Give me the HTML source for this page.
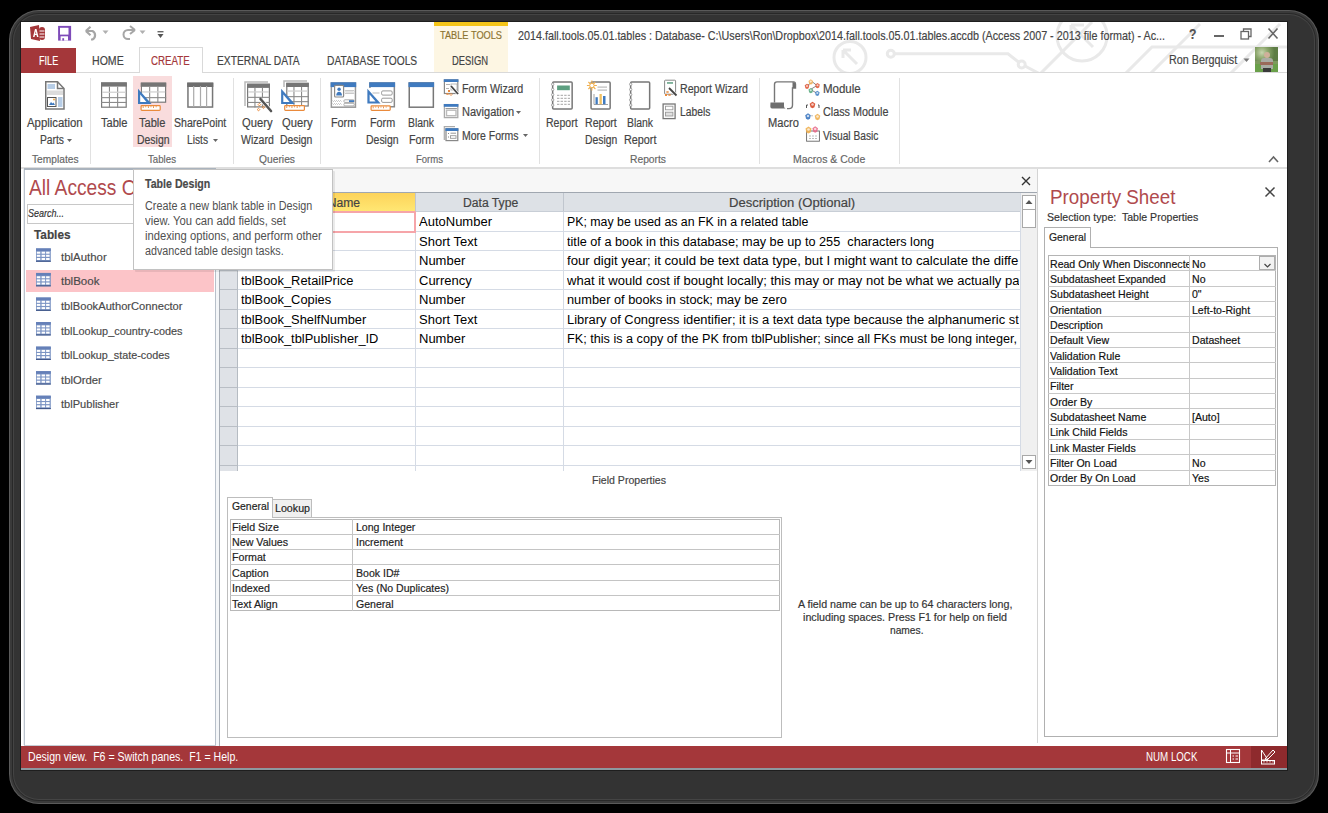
<!DOCTYPE html><html><head><meta charset="utf-8"><style>
html,body{margin:0;padding:0;width:1328px;height:813px;overflow:hidden;background:#000;}
body{position:relative;font-family:"Liberation Sans", sans-serif;}
.a{position:absolute;}
.t{position:absolute;white-space:pre;line-height:1;transform-origin:0 0;-webkit-text-stroke:0.18px currentColor;}
</style></head><body>
<div class="a" style="left:9px;top:10px;width:1310px;height:794px;background:#5a5a5a;border-radius:30px;"></div>
<div class="a" style="left:10px;top:11px;width:1308px;height:792px;background:#3a3a3a;border-radius:29px;"></div>
<div class="a" style="left:12px;top:13px;width:1304px;height:788px;background:#282828;border-radius:27px;"></div>
<div class="a" style="left:13px;top:14px;width:1302px;height:786px;background:#444444;border-radius:26px;"></div>
<div class="a" style="left:14px;top:15px;width:1300px;height:784px;background:#333333;border-radius:25px;"></div>
<div class="a" style="left:20px;top:21px;width:1268px;height:750px;background:#1e1e1e;"></div>
<div class="a" style="left:21px;top:22px;width:1266px;height:748px;background:#ffffff;"></div>
<svg class="a" style="left:0;top:0" width="1328" height="813"><defs><clipPath id="wm"><rect x="509" y="22" width="778" height="50"/></clipPath></defs>
<g clip-path="url(#wm)" stroke="#e9e9e9" stroke-width="3" fill="none">
<circle cx="850" cy="57.4" r="16"/>
<path d="M843 50 L857 64 M843 50 V58 M843 50 H851"/>
<circle cx="890.8" cy="53.8" r="3.5"/>
<path d="M894.3 53.8 H1008 L1018.5 62"/>
<circle cx="1021.7" cy="64.5" r="3.5"/>
<path d="M1025 66 L1040 74"/>
<circle cx="1082" cy="36" r="25"/>
<path d="M1071 25 L1093 47 M1071 25 V38 M1071 25 H1084"/>
<path d="M1040 74 L1092 22"/>
<path d="M1125 74 L1152 47 H1290"/>
<path d="M1150 74 L1200 24 M1230 74 L1280 24"/>
</g></svg>
<svg class="a" style="left:29px;top:24px" width="18" height="19" viewBox="0 0 18 19"><path d="M1 3 L10 1 L11 17 L2 15 Z" fill="#a4373a"/>
<path d="M4 13 L6 5 L7.5 5 L9.5 13 L8 13 L7.5 11 L6 11 L5.5 13Z M6.2 9.7 L7.3 9.7 L6.8 7.2Z" fill="#fff"/>
<rect x="10" y="3" width="6" height="13" rx="3" fill="#a4373a"/>
<path d="M10.5 7 h5 M10.5 10 h5 M10.5 13 h5" stroke="#fff" stroke-width="1"/></svg>
<svg class="a" style="left:57px;top:25px" width="15" height="16" viewBox="0 0 15 16"><rect x="1.1" y="0.9" width="13" height="14.7" fill="#7e4bb9"/>
<rect x="3" y="2.8" width="8.5" height="6.8" fill="#fff"/>
<rect x="3.6" y="11.3" width="7.4" height="4.3" fill="#fff"/><rect x="5.3" y="13.2" width="1.8" height="2.4" fill="#7e4bb9"/></svg>
<svg class="a" style="left:84px;top:25px" width="16" height="16" viewBox="0 0 16 16"><path d="M1.8 6 L6.5 1.8 M1.8 6 L6.5 10.2" stroke="#a6a6a6" stroke-width="2.2" fill="none"/>
<path d="M2.5 6 H8.5 A4.8 4.8 0 0 1 8.5 14.5 H7" stroke="#a6a6a6" stroke-width="2.2" fill="none"/></svg>
<svg class="a" style="left:102px;top:30px" width="7" height="5" viewBox="0 0 7 5"><path d="M0.5 0.5 L6.5 0.5 L3.5 4Z" fill="#b0b0b0"/></svg>
<svg class="a" style="left:121px;top:25px" width="16" height="16" viewBox="0 0 16 16"><path d="M14 5 L9 1 M14 5 L9 9" stroke="#a6a6a6" stroke-width="2" fill="none"/>
<path d="M13.5 5 H7 A4.5 4.5 0 0 0 7 14 H9" stroke="#a6a6a6" stroke-width="2" fill="none"/></svg>
<svg class="a" style="left:139px;top:30px" width="7" height="5" viewBox="0 0 7 5"><path d="M0.5 0.5 L6.5 0.5 L3.5 4Z" fill="#b0b0b0"/></svg>
<svg class="a" style="left:157px;top:30px" width="7" height="9" viewBox="0 0 7 9"><rect x="0.5" y="1" width="6" height="1.4" fill="#666"/><path d="M0.5 4 L6.5 4 L3.5 8Z" fill="#555"/></svg>
<div class="a" style="left:434px;top:22px;width:74px;height:50px;background:#fdf6e3;"></div>
<div class="a" style="left:434px;top:22px;width:74px;height:4px;background:#f5c518;"></div>
<div class="a" style="left:1214px;top:35px;width:10px;height:2px;background:#666;"></div>
<svg class="a" style="left:1240px;top:28px" width="12" height="12" viewBox="0 0 12 12"><rect x="1" y="3.5" width="7.5" height="7.5" fill="none" stroke="#666" stroke-width="1.3"/><path d="M3.5 3.5 V1 H11 V8.5 H8.5" fill="none" stroke="#666" stroke-width="1.3"/></svg>
<svg class="a" style="left:1267px;top:27px" width="12" height="13" viewBox="0 0 12 13"><path d="M1.5 1.5 L10.5 11.5 M10.5 1.5 L1.5 11.5" stroke="#666" stroke-width="1.6"/></svg>
<div class="a" style="left:21px;top:72px;width:1266px;height:1px;background:#d9d9d9;"></div>
<div class="a" style="left:21px;top:48px;width:55px;height:25px;background:#a4373a;"></div>
<div class="a" style="left:139px;top:47px;width:64px;height:26px;background:#fff;box-sizing:border-box;border:1px solid #d9d9d9;border-bottom:none;"></div>
<svg class="a" style="left:1243px;top:58px" width="7" height="5" viewBox="0 0 7 5"><path d="M0.5 0.5 L6.5 0.5 L3.5 4Z" fill="#777"/></svg>
<div class="a" style="left:1255px;top:47px;width:23px;height:25px;overflow:hidden;background:#7d9a5e">
<div class="a" style="left:0;top:0;width:23px;height:14px;background:radial-gradient(circle at 30% 40%,#c9d6b0 0,#8aa56a 35%,#5e7d45 70%)"></div>
<div class="a" style="left:0;top:17px;width:23px;height:8px;background:#6aa04a"></div>
<div class="a" style="left:9px;top:5px;width:6px;height:6px;border-radius:3px;background:#d0b09a"></div>
<div class="a" style="left:6px;top:11px;width:12px;height:11px;border-radius:3px 3px 0 0;background:#a9aca4"></div>
<div class="a" style="left:5px;top:15px;width:13px;height:3px;background:#9a6a5a"></div>
<div class="a" style="left:8px;top:21px;width:8px;height:4px;background:#3a3a3a"></div>
</div>
<div class="a" style="left:21px;top:167px;width:1266px;height:2px;background:#dedede;"></div>
<div class="a" style="left:90px;top:78px;width:1px;height:86px;background:#e1e1e1;"></div>
<div class="a" style="left:233px;top:78px;width:1px;height:86px;background:#e1e1e1;"></div>
<div class="a" style="left:320px;top:78px;width:1px;height:86px;background:#e1e1e1;"></div>
<div class="a" style="left:539px;top:78px;width:1px;height:86px;background:#e1e1e1;"></div>
<div class="a" style="left:759px;top:78px;width:1px;height:86px;background:#e1e1e1;"></div>
<div class="a" style="left:899px;top:78px;width:1px;height:86px;background:#e1e1e1;"></div>
<div class="a" style="left:133px;top:76px;width:39px;height:71px;background:#f9dcdd;"></div>
<svg class="a" style="left:67px;top:139px" width="6" height="4" viewBox="0 0 6 4"><path d="M0 0 L5 0 L2.5 3Z" fill="#666"/></svg>
<svg class="a" style="left:212.5px;top:139px" width="6" height="4" viewBox="0 0 6 4"><path d="M0 0 L5 0 L2.5 3Z" fill="#666"/></svg>
<svg class="a" style="left:515.5px;top:110.5px" width="6" height="4" viewBox="0 0 6 4"><path d="M0 0 L5 0 L2.5 3Z" fill="#666"/></svg>
<svg class="a" style="left:522.5px;top:134px" width="6" height="4" viewBox="0 0 6 4"><path d="M0 0 L5 0 L2.5 3Z" fill="#666"/></svg>
<svg class="a" style="left:1268px;top:155px" width="11" height="8" viewBox="0 0 11 8"><path d="M1 7 L5.5 2 L10 7" stroke="#666" stroke-width="1.6" fill="none"/></svg>
<svg class="a" style="left:0px;top:0px" width="900" height="150" viewBox="0 0 900 150"><path d="M45.75 81.75 H57.5 L64 88.5 V109 H45.75 Z" fill="#fff" stroke="#777777" stroke-width="1.5"/>
<path d="M57.5 81.75 V88.5 H64" fill="none" stroke="#777777" stroke-width="1.5"/>
<rect x="47.5" y="84" width="7.5" height="5" fill="#b7cde6"/>
<rect x="47" y="90.5" width="16" height="4.5" fill="#dcdcdc"/>
<rect x="47.5" y="97.5" width="8.5" height="9" fill="#fff" stroke="#555" stroke-width="1"/>
<path d="M49 105 L51 102 L52.5 103.5 L53.5 102.5 L55 105Z" fill="#3f7abf"/>
<circle cx="54" cy="99.5" r="0.9" fill="#f0a030"/>
<rect x="58" y="97" width="4.5" height="10" fill="#b7cde6"/><rect x="101.6" y="83.0" width="24.599999999999998" height="24.199999999999992" fill="#fff" stroke="#7a7a7a" stroke-width="1.2"/><rect x="101" y="82.4" width="25.799999999999997" height="4.2" fill="#757575"/><rect x="108.9" y="86.60000000000001" width="1.1" height="21.199999999999992" fill="#8a8a8a"/><rect x="117.1" y="86.60000000000001" width="1.1" height="21.199999999999992" fill="#8a8a8a"/><rect x="101" y="97.1" width="25.799999999999997" height="1.1" fill="#8a8a8a"/><rect x="101" y="101.9" width="25.799999999999997" height="1.1" fill="#8a8a8a"/><rect x="102" y="91.60000000000001" width="23.799999999999997" height="1.3" fill="#d2d2d2"/><rect x="141.4" y="83.19999999999999" width="24.199999999999978" height="19.000000000000004" fill="#fff" stroke="#7a7a7a" stroke-width="1.2"/><rect x="140.8" y="82.6" width="25.399999999999977" height="4.2" fill="#757575"/><rect x="149.1" y="86.8" width="1.1" height="16.000000000000004" fill="#8a8a8a"/><rect x="157.3" y="86.8" width="1.1" height="16.000000000000004" fill="#8a8a8a"/><rect x="140.8" y="97.1" width="25.399999999999977" height="1.1" fill="#8a8a8a"/><rect x="141.8" y="91.30000000000001" width="23.399999999999977" height="1.3" fill="#d2d2d2"/><rect x="136" y="87" width="4.8" height="18" fill="#f9dcdd"/><path d="M138 88.8 L138 103.9 L151.6 103.9 Z" fill="#3f7abf"/><path d="M140.2 94.538 L140.2 101.9 L146.432 101.9 Z" fill="#fff"/><rect x="141.1" y="105.6" width="19.100000000000012" height="4.8" rx="0.8" fill="#fff" stroke="#ea8a3b" stroke-width="1.2"/><rect x="142.7" y="106.2" width="0.9" height="1.8" fill="#ea8a3b"/><rect x="145.29999999999998" y="106.2" width="0.9" height="1.1" fill="#ea8a3b"/><rect x="147.89999999999998" y="106.2" width="0.9" height="1.8" fill="#ea8a3b"/><rect x="150.5" y="106.2" width="0.9" height="1.1" fill="#ea8a3b"/><rect x="153.1" y="106.2" width="0.9" height="1.8" fill="#ea8a3b"/><rect x="155.7" y="106.2" width="0.9" height="1.1" fill="#ea8a3b"/><rect x="187.95" y="83.35" width="24.6" height="23.7" fill="#fff" stroke="#777777" stroke-width="1.5"/>
<rect x="187.2" y="82.6" width="26.1" height="4.4" fill="#6e6e6e"/>
<rect x="193.1" y="86" width="1.2" height="21" fill="#aaa"/><rect x="199.9" y="86" width="1.2" height="21" fill="#aaa"/><rect x="206" y="86" width="1.2" height="21" fill="#aaa"/><path d="M245 106 V82 H268" fill="none" stroke="#b9b9b9" stroke-width="1.5"/><rect x="247.6" y="84.3" width="21.8" height="22.599999999999998" fill="#fff" stroke="#7a7a7a" stroke-width="1.2"/><rect x="247" y="83.7" width="23" height="4.2" fill="#757575"/><rect x="254.4" y="87.9" width="1.1" height="19.599999999999998" fill="#8a8a8a"/><rect x="261.9" y="87.9" width="1.1" height="19.599999999999998" fill="#8a8a8a"/><rect x="247" y="96.8" width="23" height="1.1" fill="#8a8a8a"/><rect x="247" y="101.9" width="23" height="1.1" fill="#8a8a8a"/><rect x="248" y="91.30000000000001" width="21" height="1.3" fill="#d2d2d2"/><path d="M260.5 99 L271 111" stroke="#fff" stroke-width="4"/><path d="M260.5 99 L271 111" stroke="#555" stroke-width="2.6" stroke-linecap="round"/><g fill="none" stroke="#ea8a3b" stroke-width="1"><path d="M259.4 103.3 l1.3 1.3 l-1.3 1.3 l-1.3 -1.3z"/><path d="M263.5 106 l1.3 1.3 l-1.3 1.3 l-1.3 -1.3z"/><path d="M258.5 108.3 l1.3 1.3 l-1.3 1.3 l-1.3 -1.3z"/></g><path d="M284 92 V81 H307" fill="none" stroke="#b9b9b9" stroke-width="1.5"/><rect x="286.8" y="83.39999999999999" width="21.400000000000023" height="22.599999999999998" fill="#fff" stroke="#7a7a7a" stroke-width="1.2"/><rect x="286.2" y="82.8" width="22.600000000000023" height="4.2" fill="#757575"/><rect x="293.4" y="87.0" width="1.1" height="19.599999999999998" fill="#8a8a8a"/><rect x="301.0" y="87.0" width="1.1" height="19.599999999999998" fill="#8a8a8a"/><rect x="286.2" y="96.1" width="22.600000000000023" height="1.1" fill="#8a8a8a"/><rect x="286.2" y="101.1" width="22.600000000000023" height="1.1" fill="#8a8a8a"/><rect x="287.2" y="90.4" width="20.600000000000023" height="1.3" fill="#d2d2d2"/><rect x="279" y="87" width="7" height="18" fill="#fff"/><path d="M281.1 88.8 L281.1 104 L294.8 104 Z" fill="#3f7abf"/><path d="M283.3 94.576 L283.3 102 L289.594 102 Z" fill="#fff"/><rect x="284.70000000000005" y="105.6" width="19.699999999999978" height="4.8" rx="0.8" fill="#fff" stroke="#ea8a3b" stroke-width="1.2"/><rect x="286.3" y="106.2" width="0.9" height="1.8" fill="#ea8a3b"/><rect x="288.90000000000003" y="106.2" width="0.9" height="1.1" fill="#ea8a3b"/><rect x="291.5" y="106.2" width="0.9" height="1.8" fill="#ea8a3b"/><rect x="294.1" y="106.2" width="0.9" height="1.1" fill="#ea8a3b"/><rect x="296.7" y="106.2" width="0.9" height="1.8" fill="#ea8a3b"/><rect x="299.3" y="106.2" width="0.9" height="1.1" fill="#ea8a3b"/><rect x="331.35" y="83" width="24.1" height="24.2" fill="#fff" stroke="#999" stroke-width="1.5"/>
<rect x="330.6" y="82.3" width="25.6" height="4.8" fill="#3f7abf"/>
<rect x="334.6" y="85.4" width="9" height="11.6" rx="1" fill="#fff" stroke="#8a8a8a" stroke-width="1.2"/>
<circle cx="339.1" cy="89.3" r="1.7" fill="#3f7abf"/><path d="M336.2 95.5 Q336.5 91.8 339.1 91.8 Q341.7 91.8 342 95.5Z" fill="#3f7abf"/>
<path d="M345 90 l1 1.5 l1 -1.5 l1 1.5 l1 -1.5 l1 1.5 l1 -1.5 l1 1.5 l1 -1.5 l1 1.5 M345 92.5 l1 1.5 l1 -1.5 l1 1.5 l1 -1.5 l1 1.5 l1 -1.5 l1 1.5 l1 -1.5 l1 1.5" stroke="#aaa" stroke-width="0.7" fill="none"/>
<path d="M332.5 100.5 l1 1 l1 -1 l1 1 l1 -1 l1 1 l1 -1 l1 1 l1 -1 l1 1 M332.5 103.5 l1 1 l1 -1 l1 1 l1 -1 l1 1 l1 -1 l1 1 l1 -1 l1 1" stroke="#999" stroke-width="0.6" fill="none"/>
<rect x="343.9" y="99.8" width="10.3" height="2.6" rx="1" fill="#fff" stroke="#999" stroke-width="0.8"/><rect x="349" y="100.2" width="5" height="1.8" fill="#3f7abf"/>
<rect x="343.9" y="103.3" width="10.3" height="2.6" rx="1" fill="#fff" stroke="#999" stroke-width="0.8"/><path d="M369.95 88 V83 H394.35 V106.7 H390" fill="#fff" stroke="#8a8a8a" stroke-width="1.5"/>
<rect x="369.2" y="82.3" width="25.9" height="4.8" fill="#3f7abf"/>
<rect x="381.6" y="90.9" width="10.6" height="4.2" rx="1.3" fill="#fff" stroke="#999" stroke-width="1"/>
<rect x="381.6" y="98.2" width="10.6" height="4.2" rx="1.3" fill="#fff" stroke="#999" stroke-width="1"/>
<rect x="372.5" y="92.5" width="7" height="1" fill="#bbb"/><path d="M367.4 88.8 L367.4 103.6 L380.6 103.6 Z" fill="#3f7abf"/><path d="M369.59999999999997 94.42399999999999 L369.59999999999997 101.6 L375.584 101.6 Z" fill="#fff"/><rect x="371.1" y="105.89999999999999" width="19.100000000000012" height="4.500000000000003" rx="0.8" fill="#fff" stroke="#ea8a3b" stroke-width="1.2"/><rect x="372.7" y="106.5" width="0.9" height="1.8" fill="#ea8a3b"/><rect x="375.3" y="106.5" width="0.9" height="1.1" fill="#ea8a3b"/><rect x="377.9" y="106.5" width="0.9" height="1.8" fill="#ea8a3b"/><rect x="380.5" y="106.5" width="0.9" height="1.1" fill="#ea8a3b"/><rect x="383.09999999999997" y="106.5" width="0.9" height="1.8" fill="#ea8a3b"/><rect x="385.7" y="106.5" width="0.9" height="1.1" fill="#ea8a3b"/><rect x="409.25" y="83" width="24.1" height="24.2" fill="#fff" stroke="#777777" stroke-width="1.5"/>
<rect x="408.5" y="82.3" width="25.6" height="4.8" fill="#3f7abf"/><rect x="444.4" y="79.9" width="13.4" height="13.6" fill="#fff" stroke="#888" stroke-width="1.2"/>
<rect x="443.8" y="79.3" width="14.6" height="2.7" fill="#3f7abf"/>
<rect x="446" y="84" width="4" height="0.9" fill="#aaa"/><rect x="446" y="88" width="3" height="0.9" fill="#aaa"/>
<rect x="451" y="84" width="6" height="6" fill="#fff" stroke="#aaa" stroke-width="0.8"/>
<path d="M451 86 L458 94" stroke="#fff" stroke-width="3"/><path d="M451 86 L458 94" stroke="#444" stroke-width="1.8"/>
<path d="M449 90 l1 1 l-1 1 l-1 -1z M447.5 93 l1 1 l-1 1 l-1 -1z M451 93.5 l1 1 l-1 1 l-1 -1z" fill="none" stroke="#ea8a3b" stroke-width="1"/><rect x="444.4" y="104.6" width="13.4" height="13" fill="#fff" stroke="#aaa" stroke-width="1.3"/>
<rect x="443.8" y="104" width="14.6" height="2.8" fill="#3f7abf"/>
<rect x="445.5" y="108" width="11.4" height="1" fill="#999"/>
<rect x="446.5" y="110.2" width="9.5" height="5.5" fill="#fff" stroke="#bbb" stroke-width="1.4"/><path d="M444.3 140 V126.7 H455" fill="none" stroke="#aaa" stroke-width="1.2"/>
<rect x="446" y="128.8" width="11.8" height="11.8" fill="#fff" stroke="#888" stroke-width="1.2"/>
<rect x="445.4" y="128.2" width="13" height="2.8" fill="#3f7abf"/>
<rect x="448" y="133" width="1" height="1" fill="#888"/><rect x="448" y="136.5" width="1" height="1" fill="#888"/>
<rect x="450.5" y="132.7" width="5.5" height="1" fill="#999"/><rect x="450.5" y="135.7" width="5.5" height="2.6" fill="none" stroke="#999" stroke-width="0.9"/><rect x="552.65" y="82.05" width="19.5" height="26.900000000000006" rx="1" fill="#fff" stroke="#777777" stroke-width="1.5"/><circle cx="552.6999999999999" cy="84.3" r="1.2" fill="#fff" stroke="#888" stroke-width="0.7"/><circle cx="552.6999999999999" cy="89.5" r="1.2" fill="#fff" stroke="#888" stroke-width="0.7"/><circle cx="552.6999999999999" cy="94.7" r="1.2" fill="#fff" stroke="#888" stroke-width="0.7"/><circle cx="552.6999999999999" cy="99.9" r="1.2" fill="#fff" stroke="#888" stroke-width="0.7"/><circle cx="552.6999999999999" cy="105.1" r="1.2" fill="#fff" stroke="#888" stroke-width="0.7"/><rect x="557.1" y="85.5" width="12.7" height="4.7" fill="#5c9f80"/><path d="M557 95.3 H570" stroke="#9a9a9a" stroke-width="0.9" stroke-dasharray="2.4 1.2"/><path d="M557 98.3 H570" stroke="#9a9a9a" stroke-width="0.9" stroke-dasharray="2.4 1.2"/><path d="M557 101.3 H570" stroke="#9a9a9a" stroke-width="0.9" stroke-dasharray="2.4 1.2"/><path d="M557 104.3 H570" stroke="#9a9a9a" stroke-width="0.9" stroke-dasharray="2.4 1.2"/><rect x="591.05" y="82.05" width="19.1" height="26.9" rx="1" fill="#fff" stroke="#777777" stroke-width="1.5"/><rect x="597.5" y="86.5" width="9.5" height="1.2" fill="#bbb"/><rect x="597.5" y="89.5" width="9.5" height="1.2" fill="#bbb"/><path d="M594 104.5 H608 M594 94 V104.5" stroke="#999" stroke-width="0.9"/><rect x="595.5" y="97.2" width="2.3" height="7" fill="#3f7abf"/><rect x="599.5" y="94" width="2.3" height="10.2" fill="#f0c060"/><rect x="603" y="96" width="2.5" height="8.2" fill="#3f7abf"/><g stroke="#f0b050" stroke-width="1.1"><path d="M591.9 80.5 V90.5 M586.9 85.5 H596.9 M588.4 82 L595.4 89 M595.4 82 L588.4 89"/></g><circle cx="591.9" cy="85.5" r="2.2" fill="#fff" stroke="#f0b050" stroke-width="1"/><rect x="630.65" y="82.05" width="19.0" height="26.900000000000006" rx="1" fill="#fff" stroke="#777777" stroke-width="1.5"/><circle cx="630.6999999999999" cy="84.3" r="1.2" fill="#fff" stroke="#888" stroke-width="0.7"/><circle cx="630.6999999999999" cy="89.5" r="1.2" fill="#fff" stroke="#888" stroke-width="0.7"/><circle cx="630.6999999999999" cy="94.7" r="1.2" fill="#fff" stroke="#888" stroke-width="0.7"/><circle cx="630.6999999999999" cy="99.9" r="1.2" fill="#fff" stroke="#888" stroke-width="0.7"/><circle cx="630.6999999999999" cy="105.1" r="1.2" fill="#fff" stroke="#888" stroke-width="0.7"/><rect x="664.6" y="80.2" width="11" height="14" rx="0.8" fill="#fff" stroke="#888" stroke-width="1"/>
<rect x="667" y="82.2" width="6" height="1.5" fill="#5c9f80"/>
<path d="M669 88 L676.5 95.5" stroke="#fff" stroke-width="3"/><path d="M669 88 L676.5 95.5" stroke="#444" stroke-width="1.8"/>
<path d="M667.5 91 l1 1 l-1 1 l-1 -1z M666 94 l1 1 l-1 1 l-1 -1z M669.5 94 l1 1 l-1 1 l-1 -1z" fill="none" stroke="#ea8a3b" stroke-width="1"/><rect x="663.1" y="104" width="12" height="14.6" fill="#fff" stroke="#777777" stroke-width="1.3"/>
<rect x="665.5" y="106.2" width="7.4" height="3.6" fill="#fff" stroke="#999" stroke-width="0.9"/>
<rect x="665.5" y="112.2" width="7.4" height="3.8" fill="#e0e0e0" stroke="#999" stroke-width="0.9"/><path d="M774.5 102.5 V84.5 Q774.5 81.9 777 81.9 H794 Q795.5 82 795.5 84 V88 H792.5 V105 Q792.5 108.6 789 108.6 H787" fill="#fff" stroke="#777777" stroke-width="1.4"/>
<path d="M792.5 82 Q795.5 82 795.5 85 V88 H792.5 Z" fill="#6e6e6e"/>
<path d="M770.5 102.4 H784 V106 Q784 108.6 787 108.6 H772 Q770.3 108.6 770.3 106.5 Z" fill="#6e6e6e"/><path d="M808 85 L812.5 82 L817 85.5 M810.5 89.5 L817 85.5 M810.5 89.5 L816.5 93" stroke="#666" stroke-width="0.8" fill="none"/><path d="M810.8 79.3 L813.0999999999999 80.91 L812.41 83.89999999999999 L810.8 84.58999999999999 L809.1899999999999 83.89999999999999 L808.5 80.91Z" fill="#f2b25a" opacity="0.9"/><circle cx="810.8" cy="81.6" r="1.035" fill="#fff" opacity="0.7"/><path d="M807 83.7 L809.3 85.31 L808.61 88.3 L807 88.99 L805.39 88.3 L804.7 85.31Z" fill="#e05a3a" opacity="0.9"/><circle cx="807" cy="86" r="1.035" fill="#fff" opacity="0.7"/><path d="M817.5 82.9 L819.8 84.51 L819.11 87.5 L817.5 88.19 L815.89 87.5 L815.2 84.51Z" fill="#e05a3a" opacity="0.9"/><circle cx="817.5" cy="85.2" r="1.035" fill="#fff" opacity="0.7"/><path d="M810.8 87.9 L813.0999999999999 89.51 L812.41 92.5 L810.8 93.19 L809.1899999999999 92.5 L808.5 89.51Z" fill="#5aab80" opacity="0.9"/><circle cx="810.8" cy="90.2" r="1.035" fill="#fff" opacity="0.7"/><path d="M817.3 90.7 L819.5999999999999 92.31 L818.91 95.3 L817.3 95.99 L815.6899999999999 95.3 L815.0 92.31Z" fill="#4a86c8" opacity="0.9"/><circle cx="817.3" cy="93" r="1.035" fill="#fff" opacity="0.7"/><path d="M806.5 108 V105 H808 M818 105 H819 V108" stroke="#555" stroke-width="1" fill="none"/><circle cx="812" cy="115.8" r="0.5" fill="#555"/><path d="M812.5 101.7 L815.3 103.66 L814.46 107.3 L812.5 108.14 L810.54 107.3 L809.7 103.66Z" fill="#d84a2a" opacity="0.9"/><circle cx="812.5" cy="104.5" r="1.26" fill="#fff" opacity="0.7"/><path d="M808 113.2 L810.8 115.16 L809.96 118.8 L808 119.64 L806.04 118.8 L805.2 115.16Z" fill="#3a76c0" opacity="0.9"/><circle cx="808" cy="116" r="1.26" fill="#fff" opacity="0.7"/><path d="M817.5 113.7 L820.3 115.66 L819.46 119.3 L817.5 120.14 L815.54 119.3 L814.7 115.66Z" fill="#f0b050" opacity="0.9"/><circle cx="817.5" cy="116.5" r="1.26" fill="#fff" opacity="0.7"/><rect x="806.6" y="131" width="12.8" height="10.2" fill="#fff" stroke="#666" stroke-width="0.9"/><path d="M809 136 H818 M809 138.5 H818" stroke="#aaa" stroke-width="0.8" stroke-dasharray="2 1"/><path d="M808.5 126.5 L811.5 128.6 L810.6 132.5 L808.5 133.4 L806.4 132.5 L805.5 128.6Z" fill="#f0b050" opacity="0.9"/><circle cx="808.5" cy="129.5" r="1.35" fill="#fff" opacity="0.7"/><path d="M815.2 126.2 L818.0 128.16 L817.1600000000001 131.8 L815.2 132.64 L813.24 131.8 L812.4000000000001 128.16Z" fill="#e86a8a" opacity="0.9"/><circle cx="815.2" cy="129" r="1.26" fill="#fff" opacity="0.7"/></svg>
<div class="a" style="left:23px;top:169px;width:1px;height:576px;background:#eceef1;"></div>
<div class="a" style="left:24px;top:169px;width:1px;height:576px;background:#bcc4ce;"></div>
<div class="a" style="left:24px;top:168px;width:192px;height:2px;background:#aab3bd;"></div>
<div class="a" style="left:215px;top:169px;width:1px;height:577px;background:#b8c0ca;"></div>
<div class="a" style="left:216px;top:169px;width:3px;height:577px;background:#f4f6f8;"></div>
<div class="a" style="left:219px;top:169px;width:1px;height:577px;background:#a7adb5;"></div>
<div class="a" style="left:24px;top:745px;width:192px;height:1px;background:#c5ccd4;"></div>
<div class="a" style="left:27px;top:204px;width:188px;height:20px;background:#fff;box-sizing:border-box;border:1px solid #c8c8c8;"></div>
<div class="a" style="left:26px;top:270px;width:188px;height:22px;background:#fcc4c8;"></div>
<svg class="a" style="left:0px;top:240px" width="60" height="180" viewBox="0 0 60 180"><rect x="36" y="8.399999999999988" width="14.8" height="13.4" fill="#7c95c4"/><rect x="36" y="8.399999999999988" width="14.8" height="2.6" fill="#6580b8"/><rect x="36" y="20.69999999999999" width="14.8" height="1.1" fill="#43598a"/><rect x="36.8" y="11.699999999999989" width="3.5" height="2" fill="#fff"/><rect x="36.8" y="14.799999999999988" width="3.5" height="2" fill="#fff"/><rect x="36.8" y="17.99999999999999" width="3.5" height="2" fill="#fff"/><rect x="41.6" y="11.699999999999989" width="3.5" height="2" fill="#fff"/><rect x="41.6" y="14.799999999999988" width="3.5" height="2" fill="#fff"/><rect x="41.6" y="17.99999999999999" width="3.5" height="2" fill="#fff"/><rect x="46.1" y="11.699999999999989" width="3.5" height="2" fill="#fff"/><rect x="46.1" y="14.799999999999988" width="3.5" height="2" fill="#fff"/><rect x="46.1" y="17.99999999999999" width="3.5" height="2" fill="#fff"/><rect x="36" y="32.95" width="14.8" height="13.4" fill="#7c95c4"/><rect x="36" y="32.95" width="14.8" height="2.6" fill="#6580b8"/><rect x="36" y="45.25" width="14.8" height="1.1" fill="#43598a"/><rect x="36.8" y="36.25" width="3.5" height="2" fill="#fff"/><rect x="36.8" y="39.35" width="3.5" height="2" fill="#fff"/><rect x="36.8" y="42.55" width="3.5" height="2" fill="#fff"/><rect x="41.6" y="36.25" width="3.5" height="2" fill="#fff"/><rect x="41.6" y="39.35" width="3.5" height="2" fill="#fff"/><rect x="41.6" y="42.55" width="3.5" height="2" fill="#fff"/><rect x="46.1" y="36.25" width="3.5" height="2" fill="#fff"/><rect x="46.1" y="39.35" width="3.5" height="2" fill="#fff"/><rect x="46.1" y="42.55" width="3.5" height="2" fill="#fff"/><rect x="36" y="57.500000000000014" width="14.8" height="13.4" fill="#7c95c4"/><rect x="36" y="57.500000000000014" width="14.8" height="2.6" fill="#6580b8"/><rect x="36" y="69.80000000000001" width="14.8" height="1.1" fill="#43598a"/><rect x="36.8" y="60.80000000000001" width="3.5" height="2" fill="#fff"/><rect x="36.8" y="63.90000000000001" width="3.5" height="2" fill="#fff"/><rect x="36.8" y="67.10000000000001" width="3.5" height="2" fill="#fff"/><rect x="41.6" y="60.80000000000001" width="3.5" height="2" fill="#fff"/><rect x="41.6" y="63.90000000000001" width="3.5" height="2" fill="#fff"/><rect x="41.6" y="67.10000000000001" width="3.5" height="2" fill="#fff"/><rect x="46.1" y="60.80000000000001" width="3.5" height="2" fill="#fff"/><rect x="46.1" y="63.90000000000001" width="3.5" height="2" fill="#fff"/><rect x="46.1" y="67.10000000000001" width="3.5" height="2" fill="#fff"/><rect x="36" y="82.05000000000003" width="14.8" height="13.4" fill="#7c95c4"/><rect x="36" y="82.05000000000003" width="14.8" height="2.6" fill="#6580b8"/><rect x="36" y="94.35000000000002" width="14.8" height="1.1" fill="#43598a"/><rect x="36.8" y="85.35000000000002" width="3.5" height="2" fill="#fff"/><rect x="36.8" y="88.45000000000002" width="3.5" height="2" fill="#fff"/><rect x="36.8" y="91.65000000000002" width="3.5" height="2" fill="#fff"/><rect x="41.6" y="85.35000000000002" width="3.5" height="2" fill="#fff"/><rect x="41.6" y="88.45000000000002" width="3.5" height="2" fill="#fff"/><rect x="41.6" y="91.65000000000002" width="3.5" height="2" fill="#fff"/><rect x="46.1" y="85.35000000000002" width="3.5" height="2" fill="#fff"/><rect x="46.1" y="88.45000000000002" width="3.5" height="2" fill="#fff"/><rect x="46.1" y="91.65000000000002" width="3.5" height="2" fill="#fff"/><rect x="36" y="106.59999999999998" width="14.8" height="13.4" fill="#7c95c4"/><rect x="36" y="106.59999999999998" width="14.8" height="2.6" fill="#6580b8"/><rect x="36" y="118.89999999999998" width="14.8" height="1.1" fill="#43598a"/><rect x="36.8" y="109.89999999999998" width="3.5" height="2" fill="#fff"/><rect x="36.8" y="112.99999999999997" width="3.5" height="2" fill="#fff"/><rect x="36.8" y="116.19999999999997" width="3.5" height="2" fill="#fff"/><rect x="41.6" y="109.89999999999998" width="3.5" height="2" fill="#fff"/><rect x="41.6" y="112.99999999999997" width="3.5" height="2" fill="#fff"/><rect x="41.6" y="116.19999999999997" width="3.5" height="2" fill="#fff"/><rect x="46.1" y="109.89999999999998" width="3.5" height="2" fill="#fff"/><rect x="46.1" y="112.99999999999997" width="3.5" height="2" fill="#fff"/><rect x="46.1" y="116.19999999999997" width="3.5" height="2" fill="#fff"/><rect x="36" y="131.14999999999998" width="14.8" height="13.4" fill="#7c95c4"/><rect x="36" y="131.14999999999998" width="14.8" height="2.6" fill="#6580b8"/><rect x="36" y="143.45" width="14.8" height="1.1" fill="#43598a"/><rect x="36.8" y="134.45" width="3.5" height="2" fill="#fff"/><rect x="36.8" y="137.54999999999998" width="3.5" height="2" fill="#fff"/><rect x="36.8" y="140.75" width="3.5" height="2" fill="#fff"/><rect x="41.6" y="134.45" width="3.5" height="2" fill="#fff"/><rect x="41.6" y="137.54999999999998" width="3.5" height="2" fill="#fff"/><rect x="41.6" y="140.75" width="3.5" height="2" fill="#fff"/><rect x="46.1" y="134.45" width="3.5" height="2" fill="#fff"/><rect x="46.1" y="137.54999999999998" width="3.5" height="2" fill="#fff"/><rect x="46.1" y="140.75" width="3.5" height="2" fill="#fff"/><rect x="36" y="155.7" width="14.8" height="13.4" fill="#7c95c4"/><rect x="36" y="155.7" width="14.8" height="2.6" fill="#6580b8"/><rect x="36" y="168.0" width="14.8" height="1.1" fill="#43598a"/><rect x="36.8" y="159.0" width="3.5" height="2" fill="#fff"/><rect x="36.8" y="162.1" width="3.5" height="2" fill="#fff"/><rect x="36.8" y="165.3" width="3.5" height="2" fill="#fff"/><rect x="41.6" y="159.0" width="3.5" height="2" fill="#fff"/><rect x="41.6" y="162.1" width="3.5" height="2" fill="#fff"/><rect x="41.6" y="165.3" width="3.5" height="2" fill="#fff"/><rect x="46.1" y="159.0" width="3.5" height="2" fill="#fff"/><rect x="46.1" y="162.1" width="3.5" height="2" fill="#fff"/><rect x="46.1" y="165.3" width="3.5" height="2" fill="#fff"/></svg>
<div class="a" style="left:220px;top:169px;width:817px;height:24px;background:#f7f7f7;"></div>
<svg class="a" style="left:1021px;top:176px" width="10" height="10" viewBox="0 0 10 10"><path d="M1 1 L9 9 M9 1 L1 9" stroke="#333" stroke-width="1.4"/></svg>
<div class="a" style="left:220px;top:192px;width:817px;height:1px;background:#a0a7b0;"></div>
<div class="a" style="left:220px;top:193px;width:801px;height:19px;background:#dde1e6;"></div>
<div class="a" style="left:237px;top:193px;width:178px;height:19px;background:linear-gradient(#fdd35a,#ffe874);"></div>
<div class="a" style="left:415px;top:193px;width:1px;height:19px;background:#c0c6ce;"></div>
<div class="a" style="left:563px;top:193px;width:1px;height:19px;background:#c0c6ce;"></div>
<div class="a" style="left:220px;top:211px;width:801px;height:1px;background:#c8ced6;"></div>
<div class="a" style="left:220px;top:212px;width:801px;height:259px;background:#ffffff;"></div>
<div class="a" style="left:220px;top:212px;width:17.5px;height:259px;background:#dfe2e7;"></div>
<div class="a" style="left:237px;top:212px;width:1px;height:259px;background:#b5bbc2;"></div>
<div class="a" style="left:415px;top:212px;width:1px;height:259px;background:#d5dbe5;"></div>
<div class="a" style="left:563px;top:212px;width:1px;height:259px;background:#d5dbe5;"></div>
<div class="a" style="left:1020px;top:193px;width:1px;height:278px;background:#d5dbe5;"></div>
<div class="a" style="left:238px;top:231px;width:782px;height:1px;background:#d5dbe5;"></div>
<div class="a" style="left:220px;top:231px;width:17px;height:1px;background:#b9bec5;"></div>
<div class="a" style="left:238px;top:250px;width:782px;height:1px;background:#d5dbe5;"></div>
<div class="a" style="left:220px;top:250px;width:17px;height:1px;background:#b9bec5;"></div>
<div class="a" style="left:238px;top:270px;width:782px;height:1px;background:#d5dbe5;"></div>
<div class="a" style="left:220px;top:270px;width:17px;height:1px;background:#b9bec5;"></div>
<div class="a" style="left:238px;top:289px;width:782px;height:1px;background:#d5dbe5;"></div>
<div class="a" style="left:220px;top:289px;width:17px;height:1px;background:#b9bec5;"></div>
<div class="a" style="left:238px;top:309px;width:782px;height:1px;background:#d5dbe5;"></div>
<div class="a" style="left:220px;top:309px;width:17px;height:1px;background:#b9bec5;"></div>
<div class="a" style="left:238px;top:328px;width:782px;height:1px;background:#d5dbe5;"></div>
<div class="a" style="left:220px;top:328px;width:17px;height:1px;background:#b9bec5;"></div>
<div class="a" style="left:238px;top:348px;width:782px;height:1px;background:#d5dbe5;"></div>
<div class="a" style="left:220px;top:348px;width:17px;height:1px;background:#b9bec5;"></div>
<div class="a" style="left:238px;top:367px;width:782px;height:1px;background:#d5dbe5;"></div>
<div class="a" style="left:220px;top:367px;width:17px;height:1px;background:#b9bec5;"></div>
<div class="a" style="left:238px;top:387px;width:782px;height:1px;background:#d5dbe5;"></div>
<div class="a" style="left:220px;top:387px;width:17px;height:1px;background:#b9bec5;"></div>
<div class="a" style="left:238px;top:406px;width:782px;height:1px;background:#d5dbe5;"></div>
<div class="a" style="left:220px;top:406px;width:17px;height:1px;background:#b9bec5;"></div>
<div class="a" style="left:238px;top:426px;width:782px;height:1px;background:#d5dbe5;"></div>
<div class="a" style="left:220px;top:426px;width:17px;height:1px;background:#b9bec5;"></div>
<div class="a" style="left:238px;top:445px;width:782px;height:1px;background:#d5dbe5;"></div>
<div class="a" style="left:220px;top:445px;width:17px;height:1px;background:#b9bec5;"></div>
<div class="a" style="left:238px;top:465px;width:782px;height:1px;background:#d5dbe5;"></div>
<div class="a" style="left:220px;top:465px;width:17px;height:1px;background:#b9bec5;"></div>
<div class="a" style="left:237px;top:211px;width:179px;height:22px;box-sizing:border-box;border:2px solid #f6a5a9;box-sizing:border-box;"></div>
<div class="a" style="left:1021px;top:193px;width:16px;height:278px;background:#f0f0f0;"></div>
<div class="a" style="left:1022px;top:195px;width:14px;height:15px;background:#fff;box-sizing:border-box;border:1px solid #a8a8a8;"></div>
<svg class="a" style="left:1025px;top:199px" width="8" height="6" viewBox="0 0 8 6"><path d="M0.5 5 L4 1 L7.5 5Z" fill="#555"/></svg>
<div class="a" style="left:1022px;top:209px;width:14px;height:19px;background:#fff;box-sizing:border-box;border:1px solid #a8a8a8;"></div>
<div class="a" style="left:1022px;top:455px;width:14px;height:14px;background:#fff;box-sizing:border-box;border:1px solid #a8a8a8;"></div>
<svg class="a" style="left:1025px;top:459px" width="8" height="6" viewBox="0 0 8 6"><path d="M0.5 1 L4 5 L7.5 1Z" fill="#555"/></svg>
<div class="a" style="left:227px;top:517px;width:555px;height:221px;background:#fff;box-sizing:border-box;border:1px solid #bdbdbd;"></div>
<div class="a" style="left:272px;top:499px;width:40px;height:19px;background:#f0f0f0;box-sizing:border-box;border:1px solid #bdbdbd;"></div>
<div class="a" style="left:227px;top:497px;width:46px;height:21px;background:#fff;box-sizing:border-box;border:1px solid #bdbdbd;border-bottom:none;"></div>
<div class="a" style="left:230px;top:519px;width:550px;height:92px;background:#fff;box-sizing:border-box;border:1px solid #b8b8b8;"></div>
<div class="a" style="left:230px;top:534px;width:550px;height:1px;background:#c4c4c4;"></div>
<div class="a" style="left:230px;top:549px;width:550px;height:1px;background:#c4c4c4;"></div>
<div class="a" style="left:230px;top:564px;width:550px;height:1px;background:#c4c4c4;"></div>
<div class="a" style="left:230px;top:580px;width:550px;height:1px;background:#c4c4c4;"></div>
<div class="a" style="left:230px;top:595px;width:550px;height:1px;background:#c4c4c4;"></div>
<div class="a" style="left:352px;top:519px;width:1px;height:92px;background:#c4c4c4;"></div>
<div class="a" style="left:1037px;top:169px;width:1px;height:574px;background:#d4d4d4;"></div>
<svg class="a" style="left:1264px;top:186px" width="12" height="12" viewBox="0 0 12 12"><path d="M1.5 1.5 L10.5 10.5 M10.5 1.5 L1.5 10.5" stroke="#444" stroke-width="1.5"/></svg>
<div class="a" style="left:1044px;top:247px;width:234px;height:490px;background:#fff;box-sizing:border-box;border:1px solid #b0b0b0;"></div>
<div class="a" style="left:1044px;top:227px;width:47px;height:21px;background:#fff;box-sizing:border-box;border:1px solid #b0b0b0;border-bottom:none;"></div>
<div class="a" style="left:1048px;top:255px;width:228px;height:231px;background:#fff;box-sizing:border-box;border:1px solid #b4b4b4;"></div>
<div class="a" style="left:1048px;top:270px;width:228px;height:1px;background:#c8c8c8;"></div>
<div class="a" style="left:1048px;top:286px;width:228px;height:1px;background:#c8c8c8;"></div>
<div class="a" style="left:1048px;top:301px;width:228px;height:1px;background:#c8c8c8;"></div>
<div class="a" style="left:1048px;top:316px;width:228px;height:1px;background:#c8c8c8;"></div>
<div class="a" style="left:1048px;top:332px;width:228px;height:1px;background:#c8c8c8;"></div>
<div class="a" style="left:1048px;top:347px;width:228px;height:1px;background:#c8c8c8;"></div>
<div class="a" style="left:1048px;top:362px;width:228px;height:1px;background:#c8c8c8;"></div>
<div class="a" style="left:1048px;top:378px;width:228px;height:1px;background:#c8c8c8;"></div>
<div class="a" style="left:1048px;top:393px;width:228px;height:1px;background:#c8c8c8;"></div>
<div class="a" style="left:1048px;top:408px;width:228px;height:1px;background:#c8c8c8;"></div>
<div class="a" style="left:1048px;top:424px;width:228px;height:1px;background:#c8c8c8;"></div>
<div class="a" style="left:1048px;top:439px;width:228px;height:1px;background:#c8c8c8;"></div>
<div class="a" style="left:1048px;top:454px;width:228px;height:1px;background:#c8c8c8;"></div>
<div class="a" style="left:1048px;top:470px;width:228px;height:1px;background:#c8c8c8;"></div>
<div class="a" style="left:1189px;top:255px;width:1px;height:231px;background:#c8c8c8;"></div>
<div class="a" style="left:1186.5px;top:256px;width:2.5px;height:14px;background:#fff;"></div>
<div class="a" style="left:1259px;top:256px;width:16px;height:14px;background:#f2f2f2;box-sizing:border-box;border:1px solid #adadad;"></div>
<svg class="a" style="left:1263px;top:262px" width="9" height="7" viewBox="0 0 9 7"><path d="M1.5 2 L4.5 5 L7.5 2" stroke="#444" stroke-width="1.2" fill="none"/></svg>
<div class="a" style="left:21px;top:746px;width:1266px;height:22px;background:#a4373a;"></div>
<div class="a" style="left:21px;top:767.5px;width:1266px;height:2.5px;background:#8d989f;"></div>
<div class="a" style="left:1251px;top:746px;width:36px;height:22px;background:#8e2a2d;"></div>
<svg class="a" style="left:1225px;top:748px" width="17" height="16" viewBox="0 0 17 16"><rect x="1.5" y="1.5" width="13" height="13" fill="none" stroke="#fff" stroke-width="1.1"/><path d="M1.5 5 H14.5 M5.5 1.5 V14.5" stroke="#fff" stroke-width="1"/><path d="M7.5 8 H9 M10.5 8 H13 M7.5 11 H9 M10.5 11 H13" stroke="#fff" stroke-width="1"/></svg>
<svg class="a" style="left:1260px;top:748px" width="17" height="17" viewBox="0 0 17 17"><path d="M1.5 2 V12 H8Z" fill="none" stroke="#fff" stroke-width="1"/><path d="M5 11 L13 2 L15 4 L7 12Z" fill="none" stroke="#fff" stroke-width="1"/><rect x="1.5" y="12.5" width="13" height="3.5" fill="none" stroke="#fff" stroke-width="1"/><path d="M4 13 V14.5 M7 13 V14.5 M10 13 V14.5 M13 13 V14.5" stroke="#fff" stroke-width="0.8"/></svg>
<span id="t0" class="t" style="left:440.00px;top:30.06px;font-size:11.5px;color:#8c7331;transform:scaleX(0.8016);">TABLE TOOLS</span>
<span id="t1" class="t" style="left:518.00px;top:28.79px;font-size:13px;color:#444;transform:scaleX(0.8283);">2014.fall.tools.05.01.tables : Database- C:\Users\Ron\Dropbox\2014.fall.tools.05.01.tables.accdb (Access 2007 - 2013 file format) - Ac...</span>
<span id="t2" class="t" style="left:1188.50px;top:26.84px;font-size:14px;color:#555;font-weight:700;transform:scaleX(0.8759);">?</span>
<span id="t3" class="t" style="left:38.70px;top:54.64px;font-size:12px;color:#ffffff;transform:scaleX(0.7576);">FILE</span>
<span id="t4" class="t" style="left:91.80px;top:54.64px;font-size:12px;color:#444444;transform:scaleX(0.8806);">HOME</span>
<span id="t5" class="t" style="left:151.00px;top:54.64px;font-size:12px;color:#a4373a;transform:scaleX(0.8097);">CREATE</span>
<span id="t6" class="t" style="left:216.90px;top:54.64px;font-size:12px;color:#444444;transform:scaleX(0.8573);">EXTERNAL DATA</span>
<span id="t7" class="t" style="left:327.30px;top:54.64px;font-size:12px;color:#444444;transform:scaleX(0.8523);">DATABASE TOOLS</span>
<span id="t8" class="t" style="left:452.40px;top:54.64px;font-size:12px;color:#444444;transform:scaleX(0.7845);">DESIGN</span>
<span id="t9" class="t" style="left:1169.40px;top:54.04px;font-size:12px;color:#444444;transform:scaleX(0.8968);">Ron Bergquist</span>
<span id="t10" class="t" style="left:31.50px;top:154.06px;font-size:11.5px;color:#666;transform:scaleX(0.8870);">Templates</span>
<span id="t11" class="t" style="left:147.50px;top:154.06px;font-size:11.5px;color:#666;transform:scaleX(0.8421);">Tables</span>
<span id="t12" class="t" style="left:258.50px;top:154.06px;font-size:11.5px;color:#666;transform:scaleX(0.8937);">Queries</span>
<span id="t13" class="t" style="left:415.70px;top:154.06px;font-size:11.5px;color:#666;transform:scaleX(0.8284);">Forms</span>
<span id="t14" class="t" style="left:630.40px;top:154.06px;font-size:11.5px;color:#666;transform:scaleX(0.8937);">Reports</span>
<span id="t15" class="t" style="left:792.50px;top:154.06px;font-size:11.5px;color:#666;transform:scaleX(0.9121);">Macros &amp; Code</span>
<span id="t16" class="t" style="left:26.80px;top:116.84px;font-size:12px;color:#444444;transform:scaleX(0.9486);">Application</span>
<span id="t17" class="t" style="left:39.50px;top:134.14px;font-size:12px;color:#444444;transform:scaleX(0.8567);">Parts</span>
<span id="t18" class="t" style="left:100.50px;top:116.84px;font-size:12px;color:#444444;transform:scaleX(0.9237);">Table</span>
<span id="t19" class="t" style="left:139.00px;top:116.84px;font-size:12px;color:#444444;transform:scaleX(0.9237);">Table</span>
<span id="t20" class="t" style="left:136.50px;top:134.14px;font-size:12px;color:#444444;transform:scaleX(0.8699);">Design</span>
<span id="t21" class="t" style="left:174.20px;top:116.84px;font-size:12px;color:#444444;transform:scaleX(0.8808);">SharePoint</span>
<span id="t22" class="t" style="left:186.50px;top:134.14px;font-size:12px;color:#444444;transform:scaleX(0.8506);">Lists</span>
<span id="t23" class="t" style="left:242.00px;top:116.84px;font-size:12px;color:#444444;transform:scaleX(0.9331);">Query</span>
<span id="t24" class="t" style="left:240.80px;top:134.14px;font-size:12px;color:#444444;transform:scaleX(0.8783);">Wizard</span>
<span id="t25" class="t" style="left:281.50px;top:116.84px;font-size:12px;color:#444444;transform:scaleX(0.9331);">Query</span>
<span id="t26" class="t" style="left:280.00px;top:134.14px;font-size:12px;color:#444444;transform:scaleX(0.8646);">Design</span>
<span id="t27" class="t" style="left:330.80px;top:116.84px;font-size:12px;color:#444444;transform:scaleX(0.9000);">Form</span>
<span id="t28" class="t" style="left:369.50px;top:116.84px;font-size:12px;color:#444444;transform:scaleX(0.9000);">Form</span>
<span id="t29" class="t" style="left:366.30px;top:134.14px;font-size:12px;color:#444444;transform:scaleX(0.8726);">Design</span>
<span id="t30" class="t" style="left:407.90px;top:116.84px;font-size:12px;color:#444444;transform:scaleX(0.8691);">Blank</span>
<span id="t31" class="t" style="left:408.50px;top:134.14px;font-size:12px;color:#444444;transform:scaleX(0.9000);">Form</span>
<span id="t32" class="t" style="left:546.00px;top:116.84px;font-size:12px;color:#444444;transform:scaleX(0.8770);">Report</span>
<span id="t33" class="t" style="left:584.90px;top:116.84px;font-size:12px;color:#444444;transform:scaleX(0.8826);">Report</span>
<span id="t34" class="t" style="left:584.90px;top:134.14px;font-size:12px;color:#444444;transform:scaleX(0.8619);">Design</span>
<span id="t35" class="t" style="left:626.50px;top:116.84px;font-size:12px;color:#444444;transform:scaleX(0.8691);">Blank</span>
<span id="t36" class="t" style="left:623.60px;top:134.14px;font-size:12px;color:#444444;transform:scaleX(0.8992);">Report</span>
<span id="t37" class="t" style="left:767.70px;top:116.84px;font-size:12px;color:#444444;transform:scaleX(0.9237);">Macro</span>
<span id="t38" class="t" style="left:461.70px;top:82.64px;font-size:12px;color:#444444;transform:scaleX(0.8927);">Form Wizard</span>
<span id="t39" class="t" style="left:461.70px;top:106.24px;font-size:12px;color:#444444;transform:scaleX(0.9171);">Navigation</span>
<span id="t40" class="t" style="left:461.70px;top:129.64px;font-size:12px;color:#444444;transform:scaleX(0.8736);">More Forms</span>
<span id="t41" class="t" style="left:680.40px;top:82.64px;font-size:12px;color:#444444;transform:scaleX(0.8867);">Report Wizard</span>
<span id="t42" class="t" style="left:680.40px;top:106.24px;font-size:12px;color:#444444;transform:scaleX(0.8594);">Labels</span>
<span id="t43" class="t" style="left:823.00px;top:82.64px;font-size:12px;color:#444444;transform:scaleX(0.9578);">Module</span>
<span id="t44" class="t" style="left:823.00px;top:106.24px;font-size:12px;color:#444444;transform:scaleX(0.8995);">Class Module</span>
<span id="t45" class="t" style="left:823.00px;top:129.64px;font-size:12px;color:#444444;transform:scaleX(0.8503);">Visual Basic</span>
<span id="t46" class="t" style="left:29.30px;top:176.57px;font-size:22px;color:#b04a4d;-webkit-text-stroke:0;transform:scaleX(0.8720);">All Access Objects</span>
<span id="t47" class="t" style="left:28.00px;top:208.28px;font-size:11px;color:#333;font-style:italic;transform:scaleX(0.8176);">Search...</span>
<span id="t48" class="t" style="left:33.50px;top:229.14px;font-size:12px;color:#444;font-weight:700;transform:scaleX(0.9832);">Tables</span>
<span id="t49" class="t" style="left:61.00px;top:251.86px;font-size:11.5px;color:#4a4a4a;transform:scaleX(0.9928);">tblAuthor</span>
<span id="t50" class="t" style="left:61.00px;top:276.41px;font-size:11.5px;color:#4a4a4a;transform:scaleX(1.0011);">tblBook</span>
<span id="t51" class="t" style="left:61.00px;top:300.96px;font-size:11.5px;color:#4a4a4a;transform:scaleX(0.9696);">tblBookAuthorConnector</span>
<span id="t52" class="t" style="left:61.00px;top:325.51px;font-size:11.5px;color:#4a4a4a;transform:scaleX(0.9455);">tblLookup_country-codes</span>
<span id="t53" class="t" style="left:61.00px;top:350.06px;font-size:11.5px;color:#4a4a4a;transform:scaleX(0.9393);">tblLookup_state-codes</span>
<span id="t54" class="t" style="left:61.00px;top:374.61px;font-size:11.5px;color:#4a4a4a;transform:scaleX(0.9844);">tblOrder</span>
<span id="t55" class="t" style="left:61.00px;top:399.16px;font-size:11.5px;color:#4a4a4a;transform:scaleX(0.9635);">tblPublisher</span>
<span id="t56" class="t" style="left:297.60px;top:196.84px;font-size:12px;color:#444;transform:scaleX(1.0104);">Field Name</span>
<span id="t57" class="t" style="left:462.80px;top:196.84px;font-size:12px;color:#444;transform:scaleX(1.0131);">Data Type</span>
<span id="t58" class="t" style="left:729.40px;top:196.84px;font-size:12px;color:#444;transform:scaleX(1.0875);">Description (Optional)</span>
<div class="a" style="left:240.80px;top:213.21px;width:173.20px;height:18.5px;overflow:hidden"><span id="t59" class="t" style="left:0px;top:0px;font-size:12.5px;color:#000;-webkit-text-stroke:0;transform:scaleX(1.0300);top:3px;">tblBook_ID</span></div>
<div class="a" style="left:418.90px;top:213.21px;width:143.10px;height:18.5px;overflow:hidden"><span id="t60" class="t" style="left:0px;top:0px;font-size:12.5px;color:#000;-webkit-text-stroke:0;transform:scaleX(1.0400);top:3px;">AutoNumber</span></div>
<div class="a" style="left:567.00px;top:213.21px;width:451.50px;height:18.5px;overflow:hidden"><span id="t61" class="t" style="left:0px;top:0px;font-size:12.5px;color:#000;-webkit-text-stroke:0;transform:scaleX(0.9870);top:3px;">PK; may be used as an FK in a related table</span></div>
<div class="a" style="left:240.80px;top:232.68px;width:173.20px;height:18.5px;overflow:hidden"><span id="t62" class="t" style="left:0px;top:0px;font-size:12.5px;color:#000;-webkit-text-stroke:0;transform:scaleX(1.0300);top:3px;">tblBook_Title</span></div>
<div class="a" style="left:418.90px;top:232.68px;width:143.10px;height:18.5px;overflow:hidden"><span id="t63" class="t" style="left:0px;top:0px;font-size:12.5px;color:#000;-webkit-text-stroke:0;transform:scaleX(1.0400);top:3px;">Short Text</span></div>
<div class="a" style="left:567.00px;top:232.68px;width:451.50px;height:18.5px;overflow:hidden"><span id="t64" class="t" style="left:0px;top:0px;font-size:12.5px;color:#000;-webkit-text-stroke:0;transform:scaleX(1.0160);top:3px;">title of a book in this database; may be up to 255  characters long</span></div>
<div class="a" style="left:240.80px;top:252.15px;width:173.20px;height:18.5px;overflow:hidden"><span id="t65" class="t" style="left:0px;top:0px;font-size:12.5px;color:#000;-webkit-text-stroke:0;transform:scaleX(1.0300);top:3px;">tblBook_Year</span></div>
<div class="a" style="left:418.90px;top:252.15px;width:143.10px;height:18.5px;overflow:hidden"><span id="t66" class="t" style="left:0px;top:0px;font-size:12.5px;color:#000;-webkit-text-stroke:0;transform:scaleX(1.0400);top:3px;">Number</span></div>
<div class="a" style="left:567.00px;top:252.15px;width:451.50px;height:18.5px;overflow:hidden"><span id="t67" class="t" style="left:0px;top:0px;font-size:12.5px;color:#000;-webkit-text-stroke:0;transform:scaleX(1.0550);top:3px;">four digit year; it could be text data type, but I might want to calculate the diffe</span></div>
<div class="a" style="left:240.80px;top:271.62px;width:173.20px;height:18.5px;overflow:hidden"><span id="t68" class="t" style="left:0px;top:0px;font-size:12.5px;color:#000;-webkit-text-stroke:0;transform:scaleX(1.0300);top:3px;">tblBook_RetailPrice</span></div>
<div class="a" style="left:418.90px;top:271.62px;width:143.10px;height:18.5px;overflow:hidden"><span id="t69" class="t" style="left:0px;top:0px;font-size:12.5px;color:#000;-webkit-text-stroke:0;transform:scaleX(1.0400);top:3px;">Currency</span></div>
<div class="a" style="left:567.00px;top:271.62px;width:451.50px;height:18.5px;overflow:hidden"><span id="t70" class="t" style="left:0px;top:0px;font-size:12.5px;color:#000;-webkit-text-stroke:0;transform:scaleX(1.0420);top:3px;">what it would cost if bought locally; this may or may not be what we actually pa</span></div>
<div class="a" style="left:240.80px;top:291.09px;width:173.20px;height:18.5px;overflow:hidden"><span id="t71" class="t" style="left:0px;top:0px;font-size:12.5px;color:#000;-webkit-text-stroke:0;transform:scaleX(1.0300);top:3px;">tblBook_Copies</span></div>
<div class="a" style="left:418.90px;top:291.09px;width:143.10px;height:18.5px;overflow:hidden"><span id="t72" class="t" style="left:0px;top:0px;font-size:12.5px;color:#000;-webkit-text-stroke:0;transform:scaleX(1.0400);top:3px;">Number</span></div>
<div class="a" style="left:567.00px;top:291.09px;width:451.50px;height:18.5px;overflow:hidden"><span id="t73" class="t" style="left:0px;top:0px;font-size:12.5px;color:#000;-webkit-text-stroke:0;transform:scaleX(1.0240);top:3px;">number of books in stock; may be zero</span></div>
<div class="a" style="left:240.80px;top:310.56px;width:173.20px;height:18.5px;overflow:hidden"><span id="t74" class="t" style="left:0px;top:0px;font-size:12.5px;color:#000;-webkit-text-stroke:0;transform:scaleX(1.0300);top:3px;">tblBook_ShelfNumber</span></div>
<div class="a" style="left:418.90px;top:310.56px;width:143.10px;height:18.5px;overflow:hidden"><span id="t75" class="t" style="left:0px;top:0px;font-size:12.5px;color:#000;-webkit-text-stroke:0;transform:scaleX(1.0400);top:3px;">Short Text</span></div>
<div class="a" style="left:567.00px;top:310.56px;width:451.50px;height:18.5px;overflow:hidden"><span id="t76" class="t" style="left:0px;top:0px;font-size:12.5px;color:#000;-webkit-text-stroke:0;transform:scaleX(1.0320);top:3px;">Library of Congress identifier; it is a text data type because the alphanumeric st</span></div>
<div class="a" style="left:240.80px;top:330.03px;width:173.20px;height:18.5px;overflow:hidden"><span id="t77" class="t" style="left:0px;top:0px;font-size:12.5px;color:#000;-webkit-text-stroke:0;transform:scaleX(1.0300);top:3px;">tblBook_tblPublisher_ID</span></div>
<div class="a" style="left:418.90px;top:330.03px;width:143.10px;height:18.5px;overflow:hidden"><span id="t78" class="t" style="left:0px;top:0px;font-size:12.5px;color:#000;-webkit-text-stroke:0;transform:scaleX(1.0400);top:3px;">Number</span></div>
<div class="a" style="left:567.00px;top:330.03px;width:451.50px;height:18.5px;overflow:hidden"><span id="t79" class="t" style="left:0px;top:0px;font-size:12.5px;color:#000;-webkit-text-stroke:0;transform:scaleX(1.0120);top:3px;">FK; this is a copy of the PK from tblPublisher; since all FKs must be long integer,</span></div>
<span id="t80" class="t" style="left:592.00px;top:474.78px;font-size:11px;color:#444;transform:scaleX(0.9605);">Field Properties</span>
<span id="t81" class="t" style="left:231.90px;top:501.36px;font-size:11.5px;color:#222;transform:scaleX(0.9042);">General</span>
<span id="t82" class="t" style="left:274.50px;top:503.26px;font-size:11.5px;color:#222;transform:scaleX(0.9275);">Lookup</span>
<span id="t83" class="t" style="left:232.40px;top:521.68px;font-size:11px;color:#222;transform:scaleX(0.9700);">Field Size</span>
<span id="t84" class="t" style="left:355.50px;top:521.68px;font-size:11px;color:#222;transform:scaleX(0.9600);">Long Integer</span>
<span id="t85" class="t" style="left:232.40px;top:537.08px;font-size:11px;color:#222;transform:scaleX(0.9700);">New Values</span>
<span id="t86" class="t" style="left:355.50px;top:537.08px;font-size:11px;color:#222;transform:scaleX(0.9600);">Increment</span>
<span id="t87" class="t" style="left:232.40px;top:552.48px;font-size:11px;color:#222;transform:scaleX(0.9700);">Format</span>
<span id="t88" class="t" style="left:232.40px;top:567.88px;font-size:11px;color:#222;transform:scaleX(0.9700);">Caption</span>
<span id="t89" class="t" style="left:355.50px;top:567.88px;font-size:11px;color:#222;transform:scaleX(0.9600);">Book ID#</span>
<span id="t90" class="t" style="left:232.40px;top:583.28px;font-size:11px;color:#222;transform:scaleX(0.9700);">Indexed</span>
<span id="t91" class="t" style="left:355.50px;top:583.28px;font-size:11px;color:#222;transform:scaleX(0.9600);">Yes (No Duplicates)</span>
<span id="t92" class="t" style="left:232.40px;top:598.68px;font-size:11px;color:#222;transform:scaleX(0.9700);">Text Align</span>
<span id="t93" class="t" style="left:355.50px;top:598.68px;font-size:11px;color:#222;transform:scaleX(0.9600);">General</span>
<span id="t94" class="t" style="left:797.80px;top:598.58px;font-size:11px;color:#333;transform:scaleX(0.9712);">A field name can be up to 64 characters long,</span>
<span id="t95" class="t" style="left:803.00px;top:611.88px;font-size:11px;color:#333;transform:scaleX(0.9727);">including spaces. Press F1 for help on field</span>
<span id="t96" class="t" style="left:889.80px;top:625.18px;font-size:11px;color:#333;transform:scaleX(0.9285);">names.</span>
<span id="t97" class="t" style="left:1049.80px;top:186.01px;font-size:21px;color:#b04a4d;-webkit-text-stroke:0;transform:scaleX(0.8958);">Property Sheet</span>
<span id="t98" class="t" style="left:1047.20px;top:212.26px;font-size:11.5px;color:#333;transform:scaleX(0.9179);">Selection type:  Table Properties</span>
<span id="t99" class="t" style="left:1049.40px;top:231.66px;font-size:11.5px;color:#222;transform:scaleX(0.9042);">General</span>
<div class="a" style="left:1050.00px;top:255.78px;width:138.50px;height:17px;overflow:hidden"><span id="t100" class="t" style="left:0px;top:0px;font-size:11px;color:#111;transform:scaleX(0.9600);top:3px;">Read Only When Disconnected</span></div>
<span id="t101" class="t" style="left:1192.00px;top:258.78px;font-size:11px;color:#111;transform:scaleX(0.9600);">No</span>
<div class="a" style="left:1050.00px;top:271.11px;width:138.50px;height:17px;overflow:hidden"><span id="t102" class="t" style="left:0px;top:0px;font-size:11px;color:#111;transform:scaleX(0.9600);top:3px;">Subdatasheet Expanded</span></div>
<span id="t103" class="t" style="left:1192.00px;top:274.11px;font-size:11px;color:#111;transform:scaleX(0.9600);">No</span>
<div class="a" style="left:1050.00px;top:286.44px;width:138.50px;height:17px;overflow:hidden"><span id="t104" class="t" style="left:0px;top:0px;font-size:11px;color:#111;transform:scaleX(0.9600);top:3px;">Subdatasheet Height</span></div>
<span id="t105" class="t" style="left:1192.00px;top:289.44px;font-size:11px;color:#111;transform:scaleX(0.9600);">0"</span>
<div class="a" style="left:1050.00px;top:301.77px;width:138.50px;height:17px;overflow:hidden"><span id="t106" class="t" style="left:0px;top:0px;font-size:11px;color:#111;transform:scaleX(0.9600);top:3px;">Orientation</span></div>
<span id="t107" class="t" style="left:1192.00px;top:304.77px;font-size:11px;color:#111;transform:scaleX(0.9600);">Left-to-Right</span>
<div class="a" style="left:1050.00px;top:317.10px;width:138.50px;height:17px;overflow:hidden"><span id="t108" class="t" style="left:0px;top:0px;font-size:11px;color:#111;transform:scaleX(0.9600);top:3px;">Description</span></div>
<div class="a" style="left:1050.00px;top:332.43px;width:138.50px;height:17px;overflow:hidden"><span id="t109" class="t" style="left:0px;top:0px;font-size:11px;color:#111;transform:scaleX(0.9600);top:3px;">Default View</span></div>
<span id="t110" class="t" style="left:1192.00px;top:335.43px;font-size:11px;color:#111;transform:scaleX(0.9600);">Datasheet</span>
<div class="a" style="left:1050.00px;top:347.76px;width:138.50px;height:17px;overflow:hidden"><span id="t111" class="t" style="left:0px;top:0px;font-size:11px;color:#111;transform:scaleX(0.9600);top:3px;">Validation Rule</span></div>
<div class="a" style="left:1050.00px;top:363.09px;width:138.50px;height:17px;overflow:hidden"><span id="t112" class="t" style="left:0px;top:0px;font-size:11px;color:#111;transform:scaleX(0.9600);top:3px;">Validation Text</span></div>
<div class="a" style="left:1050.00px;top:378.42px;width:138.50px;height:17px;overflow:hidden"><span id="t113" class="t" style="left:0px;top:0px;font-size:11px;color:#111;transform:scaleX(0.9600);top:3px;">Filter</span></div>
<div class="a" style="left:1050.00px;top:393.75px;width:138.50px;height:17px;overflow:hidden"><span id="t114" class="t" style="left:0px;top:0px;font-size:11px;color:#111;transform:scaleX(0.9600);top:3px;">Order By</span></div>
<div class="a" style="left:1050.00px;top:409.08px;width:138.50px;height:17px;overflow:hidden"><span id="t115" class="t" style="left:0px;top:0px;font-size:11px;color:#111;transform:scaleX(0.9600);top:3px;">Subdatasheet Name</span></div>
<span id="t116" class="t" style="left:1192.00px;top:412.08px;font-size:11px;color:#111;transform:scaleX(0.9600);">[Auto]</span>
<div class="a" style="left:1050.00px;top:424.41px;width:138.50px;height:17px;overflow:hidden"><span id="t117" class="t" style="left:0px;top:0px;font-size:11px;color:#111;transform:scaleX(0.9600);top:3px;">Link Child Fields</span></div>
<div class="a" style="left:1050.00px;top:439.74px;width:138.50px;height:17px;overflow:hidden"><span id="t118" class="t" style="left:0px;top:0px;font-size:11px;color:#111;transform:scaleX(0.9600);top:3px;">Link Master Fields</span></div>
<div class="a" style="left:1050.00px;top:455.07px;width:138.50px;height:17px;overflow:hidden"><span id="t119" class="t" style="left:0px;top:0px;font-size:11px;color:#111;transform:scaleX(0.9600);top:3px;">Filter On Load</span></div>
<span id="t120" class="t" style="left:1192.00px;top:458.07px;font-size:11px;color:#111;transform:scaleX(0.9600);">No</span>
<div class="a" style="left:1050.00px;top:470.40px;width:138.50px;height:17px;overflow:hidden"><span id="t121" class="t" style="left:0px;top:0px;font-size:11px;color:#111;transform:scaleX(0.9600);top:3px;">Order By On Load</span></div>
<span id="t122" class="t" style="left:1192.00px;top:473.40px;font-size:11px;color:#111;transform:scaleX(0.9600);">Yes</span>
<span id="t123" class="t" style="left:27.60px;top:751.14px;font-size:12px;color:#fff;-webkit-text-stroke:0;transform:scaleX(0.8803);">Design view.  F6 = Switch panes.  F1 = Help.</span>
<span id="t124" class="t" style="left:1146.40px;top:751.14px;font-size:12px;color:#fff;-webkit-text-stroke:0;transform:scaleX(0.8114);">NUM LOCK</span>
<div class="a" style="left:135px;top:171px;width:200px;height:101px;background:rgba(0,0,0,0.08);border-radius:1px;"></div>
<div class="a" style="left:133px;top:169px;width:200px;height:101px;background:#ffffff;box-sizing:border-box;border:1px solid #c2c2c2;"></div>
<span id="t125" class="t" style="left:144.50px;top:178.04px;font-size:12px;color:#4a4a4a;font-weight:700;transform:scaleX(0.8849);">Table Design</span>
<span id="t126" class="t" style="left:144.50px;top:199.54px;font-size:12px;color:#505050;-webkit-text-stroke:0;transform:scaleX(0.8989);">Create a new blank table in Design</span>
<span id="t127" class="t" style="left:144.50px;top:214.74px;font-size:12px;color:#505050;-webkit-text-stroke:0;transform:scaleX(0.9393);">view. You can add fields, set</span>
<span id="t128" class="t" style="left:144.50px;top:229.94px;font-size:12px;color:#505050;-webkit-text-stroke:0;transform:scaleX(0.9365);">indexing options, and perform other</span>
<span id="t129" class="t" style="left:144.50px;top:245.14px;font-size:12px;color:#505050;-webkit-text-stroke:0;transform:scaleX(0.8961);">advanced table design tasks.</span>
</body></html>
